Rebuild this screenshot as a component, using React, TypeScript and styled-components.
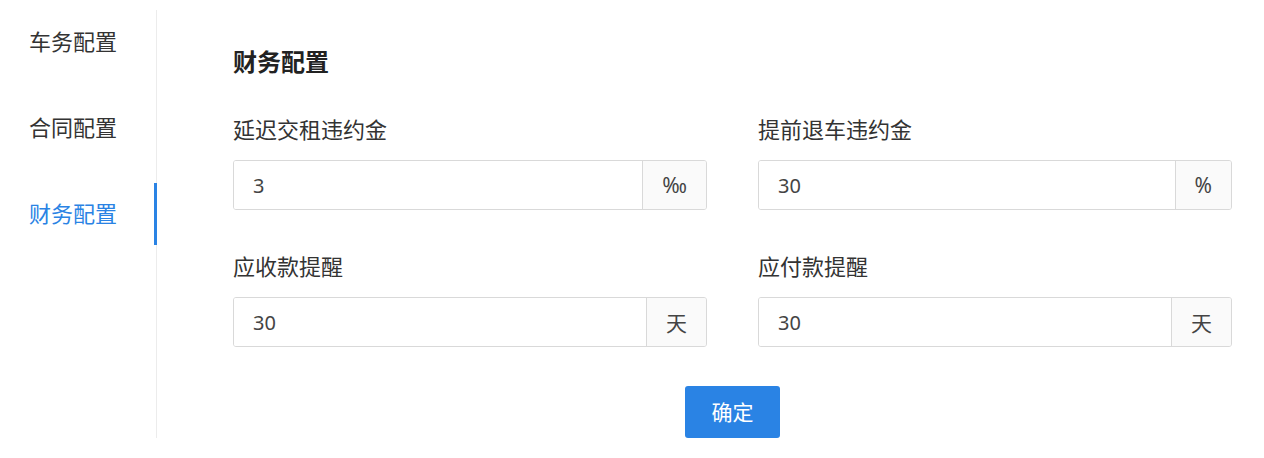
import React from "react";
import styled, { createGlobalStyle } from "styled-components";

const Global = createGlobalStyle`
  html, body { margin: 0; padding: 0; background: #fff; }
  body { font-family: "Noto Sans", "Noto Sans CJK SC", sans-serif; color: #333; }
  * { box-sizing: border-box; }
`;

const Page = styled.div`
  display: flex;
  padding-top: 10px;
  height: 438px;
`;

const Sidebar = styled.nav`
  width: 157px;
  flex: none;
  border-right: 1px solid #ececec;
  padding-top: 2px;
  display: flex;
  flex-direction: column;
  gap: 26px;
`;

const MenuItem = styled.div<{ $active?: boolean }>`
  position: relative;
  height: 60px;
  padding: 0 0 5px 29px;
  display: flex;
  align-items: center;
  font-family: "Noto Sans CJK SC", sans-serif;
  font-size: 22px;
  color: ${(p) => (p.$active ? "#2a83e4" : "#333")};
  &::after {
    content: "";
    display: ${(p) => (p.$active ? "block" : "none")};
    position: absolute;
    right: -1px;
    top: -1px;
    bottom: -1px;
    width: 3px;
    background: #2a83e4;
  }
`;

const Main = styled.main`
  flex: 1;
  padding: 37px 32px 0 76px;
  display: flex;
  flex-direction: column;
`;

const Title = styled.h2`
  margin: 0;
  padding-bottom: 4px;
  font-family: "Noto Sans CJK SC", sans-serif;
  font-size: 24px;
  line-height: 28px;
  font-weight: 700;
  color: #222;
`;

const Grid = styled.div`
  margin-top: 36px;
  display: grid;
  grid-template-columns: 1fr 1fr;
  column-gap: 51px;
  row-gap: 42px;
`;

const Field = styled.div`
  display: flex;
  flex-direction: column;
`;

const Label = styled.label`
  font-family: "Noto Sans CJK SC", sans-serif;
  font-size: 22px;
  line-height: 26px;
  color: #333;
  margin-bottom: 19px;
`;

const InputGroup = styled.div`
  display: flex;
  height: 50px;
  border: 1px solid #d9d9d9;
  border-radius: 3px;
  overflow: hidden;
`;

const Input = styled.input`
  flex: 1;
  min-width: 0;
  border: none;
  outline: none;
  padding: 0 19px;
  font-family: "Noto Sans", "Noto Sans CJK SC", sans-serif;
  font-size: 20px;
  color: #444;
  background: #fff;
`;

const Addon = styled.span`
  flex: none;
  display: flex;
  align-items: center;
  padding: 0 19px;
  border-left: 1px solid #d9d9d9;
  background: #fafafa;
  font-family: "Noto Sans", "Noto Sans CJK SC", sans-serif;
  font-size: 21px;
  color: #444;
`;

const Actions = styled.div`
  margin-top: 39px;
  display: flex;
  justify-content: center;
`;

const Button = styled.button`
  width: 95px;
  height: 52px;
  padding: 0 0 3px;
  border: none;
  border-radius: 3px;
  background: #2a83e4;
  color: #fff;
  font-family: "Noto Sans CJK SC", sans-serif;
  font-size: 21px;
  cursor: pointer;
`;

const fields = [
  { label: "延迟交租违约金", value: "3", unit: "‰" },
  { label: "提前退车违约金", value: "30", unit: "%" },
  { label: "应收款提醒", value: "30", unit: "天" },
  { label: "应付款提醒", value: "30", unit: "天" },
];

export default function App() {
  return (
    <>
      <Global />
      <Page>
        <Sidebar>
          <MenuItem>车务配置</MenuItem>
          <MenuItem>合同配置</MenuItem>
          <MenuItem $active>财务配置</MenuItem>
        </Sidebar>
        <Main>
          <Title>财务配置</Title>
          <Grid>
            {fields.map((f) => (
              <Field key={f.label}>
                <Label>{f.label}</Label>
                <InputGroup>
                  <Input defaultValue={f.value} />
                  <Addon>{f.unit}</Addon>
                </InputGroup>
              </Field>
            ))}
          </Grid>
          <Actions>
            <Button>确定</Button>
          </Actions>
        </Main>
      </Page>
    </>
  );
}
